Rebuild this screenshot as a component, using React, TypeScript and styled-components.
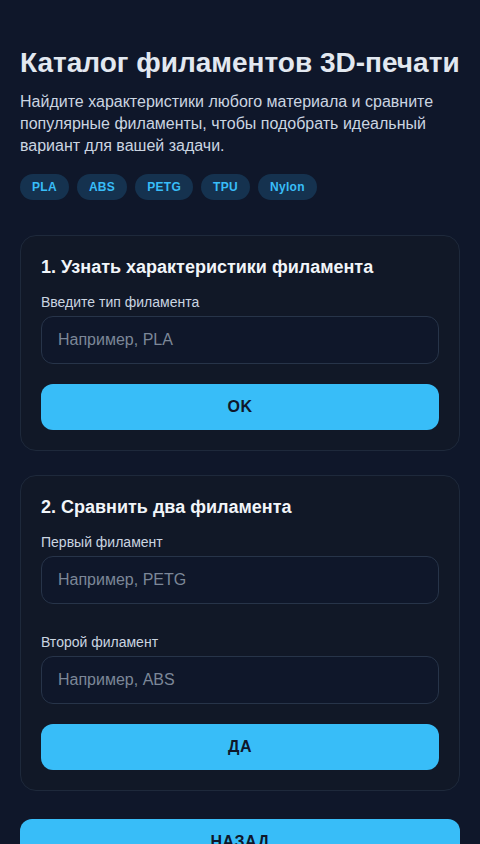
import React, { useState } from 'react';
import styled, { createGlobalStyle } from 'styled-components';

const GlobalStyle = createGlobalStyle`
  * {
    box-sizing: border-box;
  }
  body {
    margin: 0;
    background: #0f172a;
    color: #e2e8f0;
    font-family: 'Liberation Sans', Arial, sans-serif;
  }
`;

const chips = ['PLA', 'ABS', 'PETG', 'TPU', 'Nylon'];

const App = () => {
  const [single, setSingle] = useState('');
  const [first, setFirst] = useState('');
  const [second, setSecond] = useState('');

  return (
    <>
      <GlobalStyle />
      <Page>
        <Header>
          <Title>Каталог филаментов 3D-печати</Title>
          <Subtitle>
            Найдите характеристики любого материала и сравните популярные
            филаменты, чтобы подобрать идеальный вариант для вашей задачи.
          </Subtitle>
          <ChipRow>
            {chips.map((chip) => (
              <Chip key={chip}>{chip}</Chip>
            ))}
          </ChipRow>
        </Header>

        <Card>
          <CardTitle>1. Узнать характеристики филамента</CardTitle>
          <Field>
            <Label>Введите тип филамента</Label>
            <Input
              placeholder="Например, PLA"
              value={single}
              onChange={(e) => setSingle(e.target.value)}
            />
          </Field>
          <PrimaryButton>OK</PrimaryButton>
        </Card>

        <Card>
          <CardTitle>2. Сравнить два филамента</CardTitle>
          <Field>
            <Label>Первый филамент</Label>
            <Input
              placeholder="Например, PETG"
              value={first}
              onChange={(e) => setFirst(e.target.value)}
            />
          </Field>
          <Field $spaced>
            <Label>Второй филамент</Label>
            <Input
              placeholder="Например, ABS"
              value={second}
              onChange={(e) => setSecond(e.target.value)}
            />
          </Field>
          <PrimaryButton>ДА</PrimaryButton>
        </Card>

        <BackButton>НАЗАД</BackButton>
      </Page>
    </>
  );
};

const Page = styled.div`
  display: flex;
  flex-direction: column;
  padding: 46px 20px 40px;
`;

const Header = styled.header`
  display: flex;
  flex-direction: column;
  margin-bottom: 35px;
`;

const Title = styled.h1`
  margin: 0;
  font-size: 28px;
  line-height: 34px;
  font-weight: 700;
  color: #e2e8f0;
`;

const Subtitle = styled.p`
  margin: 11px 0 0;
  font-size: 16px;
  line-height: 22px;
  color: #cbd5e1;
`;

const ChipRow = styled.div`
  display: flex;
  gap: 8px;
  margin-top: 17px;
`;

const Chip = styled.span`
  display: inline-flex;
  align-items: center;
  height: 26px;
  padding: 0 12px;
  border-radius: 13px;
  background: #15324f;
  color: #38bdf8;
  font-size: 12px;
  font-weight: 700;
  letter-spacing: 0.3px;
`;

const Card = styled.section`
  display: flex;
  flex-direction: column;
  padding: 20px;
  margin-bottom: 24px;
  background: #111827;
  border: 1px solid #1e293b;
  border-radius: 16px;
`;

const CardTitle = styled.h2`
  margin: 0 0 14px;
  font-size: 18px;
  line-height: 22px;
  font-weight: 700;
  color: #f1f5f9;
`;

const Field = styled.div<{ $spaced?: boolean }>`
  display: flex;
  flex-direction: column;
  gap: 4px;
  margin-top: ${(p) => (p.$spaced ? '28px' : '0')};
`;

const Label = styled.label`
  font-size: 14px;
  line-height: 20px;
  color: #cbd5e1;
`;

const Input = styled.input`
  height: 48px;
  padding: 0 16px;
  border: 1px solid #273449;
  border-radius: 12px;
  background: #0f172a;
  color: #e2e8f0;
  font-family: inherit;
  font-size: 16px;
  outline: none;

  &::placeholder {
    color: #7c8798;
  }
`;

const PrimaryButton = styled.button`
  height: 46px;
  margin-top: 20px;
  border: none;
  border-radius: 12px;
  background: #38bdf8;
  color: #0f172a;
  font-family: inherit;
  font-size: 16px;
  font-weight: 700;
  letter-spacing: 0.5px;
  cursor: pointer;
`;

const BackButton = styled(PrimaryButton)`
  margin-top: 4px;
`;

export default App;
